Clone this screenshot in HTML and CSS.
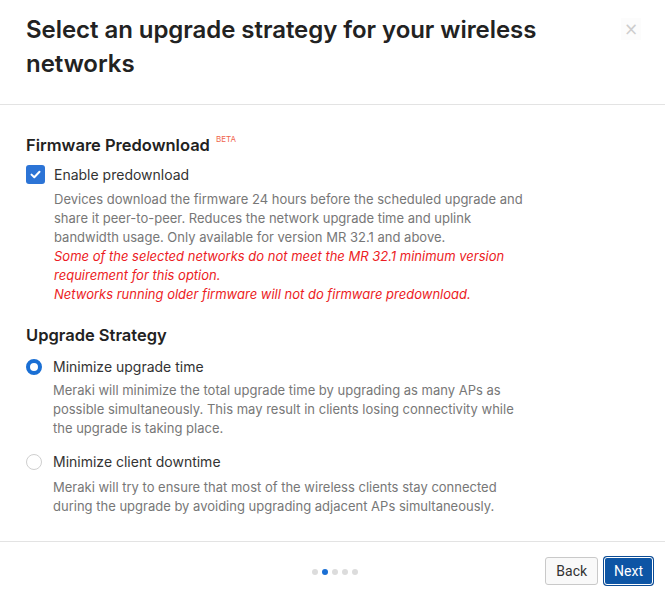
FILE: index.html
```html
<!DOCTYPE html>
<html lang="en">
<head>
    <meta charset="UTF-8">
    <meta name="viewport" content="width=device-width, initial-scale=1.0">
    <title>Upgrade strategy</title>
    <link rel="stylesheet" href="styles.css">
</head>
<body>
    <div class="modal">
        <header class="modal-head">
            <h1>Select an upgrade strategy for your wireless networks</h1>
            <button class="close" aria-label="Close">&times;</button>
        </header>
        <main class="modal-body">
            <section class="group">
                <h2>Firmware Predownload <sup class="beta">BETA</sup></h2>
                <label class="option">
                    <span class="check">
                        <svg width="11" height="9" viewBox="0 0 11 9"><path d="M1.5 4.6l2.8 2.7L9.5 1.8" fill="none" stroke="#fff" stroke-width="2" stroke-linecap="round" stroke-linejoin="round"/></svg>
                    </span>
                    Enable predownload
                </label>
                <p class="desc">Devices download the firmware 24 hours before the scheduled upgrade and share it peer-to-peer. Reduces the network upgrade time and uplink bandwidth usage. Only available for version MR 32.1 and above.
                    <em class="warn">Some of the selected networks do not meet the MR 32.1 minimum version requirement for this option.</em>
                    <em class="warn">Networks running older firmware will not do firmware predownload.</em>
                </p>
            </section>
            <section class="group strategy">
                <h2>Upgrade Strategy</h2>
                <label class="option radio-row">
                    <span class="radio on"></span>
                    Minimize upgrade time
                </label>
                <p class="desc">Meraki will minimize the total upgrade time by upgrading as many APs as possible simultaneously. This may result in clients losing connectivity while the upgrade is taking place.</p>
                <label class="option radio-row second">
                    <span class="radio"></span>
                    Minimize client downtime
                </label>
                <p class="desc">Meraki will try to ensure that most of the wireless clients stay connected during the upgrade by avoiding upgrading adjacent APs simultaneously.</p>
            </section>
        </main>
        <footer class="modal-foot">
            <div></div>
            <div class="dots">
                <span></span><span class="active"></span><span></span><span></span><span></span>
            </div>
            <div class="actions">
                <button class="btn">Back</button>
                <button class="btn primary">Next</button>
            </div>
        </footer>
    </div>
</body>
</html>
```

FILE: styles.css
```css
html {
    font-family: Inter, "Noto Sans", sans-serif;
    color: #333;
}
body {
    margin: 0;
    background: #fff;
}
.modal {
    display: flex;
    flex-direction: column;
    width: 666px;
    height: 600px;
}
.modal-head {
    display: flex;
    justify-content: space-between;
    align-items: flex-start;
    padding: 13px 26px 23px 26px;
    border-bottom: 1px solid #e3e3e3;
    margin-right: 1px;
}
.modal-head h1 {
    margin: 0;
    max-width: 560px;
    font-size: 24px;
    font-weight: 600;
    line-height: 34px;
    color: #222;
    letter-spacing: -0.05px;
}
.close {
    border: 0;
    background: #fcfcfc;
    color: #cdcdcd;
    font-size: 17px;
    line-height: 20px;
    width: 20px;
    height: 22px;
    padding: 0;
    margin: 5px -2px 0 0;
    font-family: "DejaVu Sans", sans-serif;
}
.modal-body {
    flex: 1;
    padding: 24px 26px 0 26px;
}
.group h2 {
    margin: 0;
    font-size: 16.5px;
    font-weight: 600;
    line-height: 20px;
    color: #222;
}
.beta {
    font-size: 8px;
    font-weight: 400;
    color: #f0654d;
    vertical-align: 9px;
    margin-left: 2px;
}
.option {
    display: flex;
    align-items: center;
    gap: 9px;
    font-size: 14px;
    line-height: 19px;
    color: #333;
    margin-top: 10px;
}
.check {
    display: flex;
    align-items: center;
    justify-content: center;
    width: 19px;
    height: 19px;
    border-radius: 3px;
    background: #2c74d6;
}
.desc {
    margin: 6px 0 0 28px;
    max-width: 474px;
    font-size: 13px;
    line-height: 19px;
    color: #777;
}
.warn {
    display: block;
    color: #ec1c24;
}
.strategy {
    margin-top: 21px;
}
.radio-row {
    gap: 11px;
    margin-top: 12px;
}
.radio-row + .desc {
    margin-left: 27px;
    margin-top: 5px;
}
.radio-row.second {
    margin-top: 14px;
}
.radio-row.second + .desc {
    margin-top: 7px;
}
.radio {
    box-sizing: border-box;
    width: 16px;
    height: 16px;
    border-radius: 50%;
    border: 1px solid #cfcfcf;
    background: #fff;
}
.radio.on {
    border: 4px solid #1a6fd4;
}
.modal-foot {
    display: grid;
    grid-template-columns: 1fr auto 1fr;
    align-items: center;
    height: 58px;
    border-top: 1px solid #e3e3e3;
    margin-right: 1px;
    padding: 0 12px 0 16px;
}
.dots {
    display: flex;
    gap: 4px;
    padding-top: 1px;
}
.dots span {
    width: 6px;
    height: 6px;
    border-radius: 50%;
    background: #dcdcdc;
}
.dots .active {
    background: #1a6fd4;
}
.actions {
    display: flex;
    justify-content: flex-end;
    gap: 6px;
}
.btn {
    font-family: Roboto, "Liberation Sans", sans-serif;
    font-size: 14px;
    height: 28px;
    padding: 0 10px;
    border: 1px solid #c9c9c9;
    border-radius: 3px;
    background: #f9f9f9;
    color: #333;
}
.btn.primary {
    background: #0d55a5;
    color: #fff;
    border: 1px solid #fff;
    box-shadow: 0 0 0 1px #0d4c95;
    padding: 0 9px;
}
```
